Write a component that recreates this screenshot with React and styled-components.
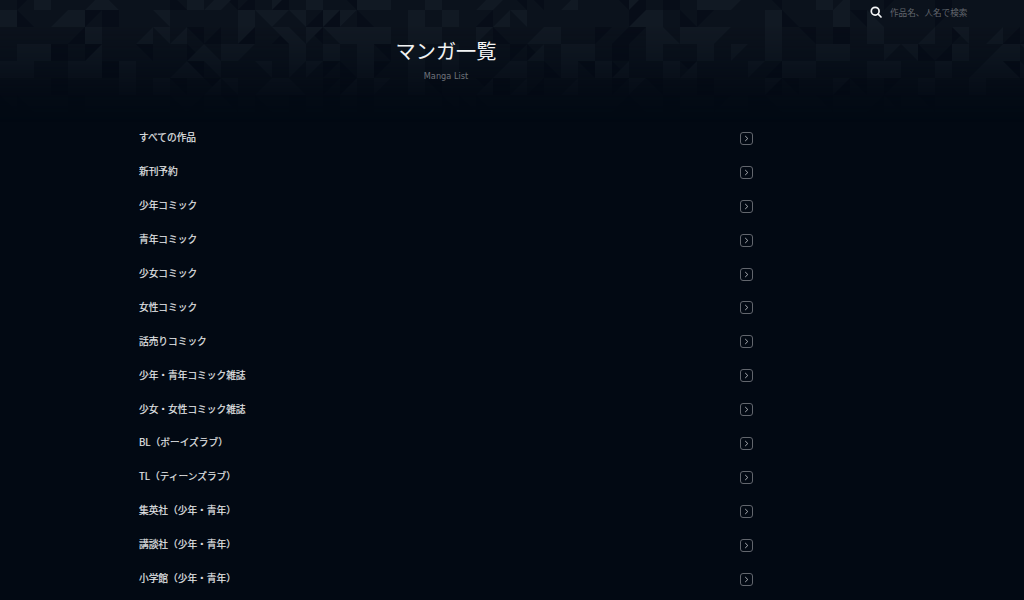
import React from "react";
import styled, { createGlobalStyle } from "styled-components";

const Global = createGlobalStyle`
  html, body { margin: 0; padding: 0; background: #020913; overflow: hidden; }
  #root { height: 600px; }
`;

const CJK = `"Noto Sans CJK JP", "Noto Sans", sans-serif`;

const Page = styled.div`
  position: relative;
  width: 1024px;
  height: 600px;
  overflow: hidden;
  background: #020913;
  font-family: ${CJK};
`;

const Backdrop = styled.svg`
  position: absolute;
  left: 0;
  top: 0;
  width: 1024px;
  height: 125px;
  -webkit-mask-image: linear-gradient(to bottom, #000 0, #000 25px, rgba(0,0,0,.65) 62px, rgba(0,0,0,.28) 90px, transparent 122px);
  mask-image: linear-gradient(to bottom, #000 0, #000 25px, rgba(0,0,0,.65) 62px, rgba(0,0,0,.28) 90px, transparent 122px);
`;

const Content = styled.div`
  position: relative;
  display: flex;
  flex-direction: column;
`;

const TopBar = styled.div`
  display: flex;
  justify-content: flex-end;
  align-items: center;
  height: 24px;
  padding-right: 57px;
  gap: 8px;
`;

const SearchHint = styled.span`
  font-size: 8.6px;
  color: #62666d;
  width: 77px;
  white-space: nowrap;
`;

const Column = styled.main`
  width: 614px;
  margin-left: 139px;
  display: flex;
  flex-direction: column;
`;

const Heading = styled.header`
  display: flex;
  flex-direction: column;
  align-items: center;
  height: 97.5px;
  padding-top: 12px;
  box-sizing: border-box;
`;

const Title = styled.h1`
  margin: 0;
  font-size: 20.2px;
  line-height: 30px;
  font-weight: 400;
  color: #f2f3f4;
`;

const Subtitle = styled.div`
  margin-top: 4px;
  font-family: "DejaVu Sans", sans-serif;
  font-size: 8.2px;
  line-height: 12px;
  color: #70747b;
`;

const List = styled.ul`
  list-style: none;
  margin: 0;
  padding: 0;
`;

const Row = styled.li`
  height: 33.9px;
  display: flex;
  align-items: center;
  justify-content: space-between;
`;

const Label = styled.span`
  font-size: 9.7px;
  line-height: 14px;
  font-weight: 400;
  -webkit-text-stroke: 0.2px #d8dadd;
  color: #e8e9eb;
  white-space: nowrap;
  position: relative;
  top: -1px;
`;

const Arrow = styled.span`
  width: 13px;
  height: 13px;
  box-sizing: border-box;
  border: 1px solid #62666d;
  border-radius: 3px;
  display: flex;
  align-items: center;
  justify-content: center;
`;

const ROWS = [
  "  #  cd    #ca  a #",
  "#  c#    b    #bab a",
  "     #  cbc   a bdab#",
  " ##  c     cd#a  # #",
  "##  ## #  cdb  b aa",
  "       # #  cb c#d",
];
const ROWS2 = [
  " ##  #  ca   c   a   #",
  "a   # #  cb      c#",
  " ## ##  a  c#     #d##",
  " #  # #    c ##   #  #",
  " #  # #  c#  # #c  #c",
  "c a #   c c  c   a",
];
const ROWS3 = [
  " #a    #c",
  "    #   # d",
  " a  #     #  c b c  a",
  "  a #  ##  ab  # c#baa",
  "   a ##   ##  # c#ddd",
  "    a   a    #  #   b",
];

const TILE = 17;
const OFFSET = -7;

function tilePath(kind, x, y) {
  const s = TILE;
  const a = [x, y], b = [x + s, y], c = [x + s, y + s], d = [x, y + s];
  const poly = {
    "#": [a, b, c, d],
    a: [a, b, d],
    b: [a, b, c],
    c: [b, c, d],
    d: [a, c, d],
  }[kind];
  return poly ? `M${poly.map((p) => p.join(" ")).join("L")}Z` : "";
}

function seeded(i, j) {
  const v = Math.sin(i * 12.9898 + j * 78.233) * 43758.5453;
  return v - Math.floor(v);
}

function Tiles() {
  const light = [];
  const dark = [];
  for (let r = 0; r < 7; r++) {
    const y = OFFSET + r * TILE;
    const put = (str, start) => {
      [...(str || "")].forEach((k, i) => {
        if (k !== " ") light.push(tilePath(k, start + i * TILE, y));
      });
    };
    put(ROWS[r], 0);
    put(ROWS2[r], 20 * TILE);
    put(ROWS3[r], 41 * TILE);
    for (let c = 0; c < 61; c++) {
      if (seeded(c, r) > 0.7) dark.push(tilePath("abcd#"[Math.floor(seeded(r, c) * 5)], c * TILE, y));
    }
  }
  return (
    <Backdrop viewBox="0 0 1024 125" aria-hidden="true">
      <rect width="1024" height="125" fill="#0b121c" />
      <path d={dark.join("")} fill="#070d18" />
      <path d={light.join("")} fill="#111923" />
    </Backdrop>
  );
}

const ITEMS = [
  "すべての作品",
  "新刊予約",
  "少年コミック",
  "青年コミック",
  "少女コミック",
  "女性コミック",
  "話売りコミック",
  "少年・青年コミック雑誌",
  "少女・女性コミック雑誌",
  "BL（ボーイズラブ）",
  "TL（ティーンズラブ）",
  "集英社（少年・青年）",
  "講談社（少年・青年）",
  "小学館（少年・青年）",
];

export default function App() {
  return (
    <Page>
      <Global />
      <Tiles />
      <Content>
        <TopBar>
          <svg width="12" height="12" viewBox="0 0 12 12" fill="none" stroke="#f4f5f6" strokeWidth="1.7" strokeLinecap="round">
            <circle cx="5.2" cy="5.2" r="3.9" />
            <path d="M8.2 8.2 11 11" />
          </svg>
          <SearchHint>作品名、人名で検索</SearchHint>
        </TopBar>
        <Column>
          <Heading>
            <Title>マンガ一覧</Title>
            <Subtitle>Manga List</Subtitle>
          </Heading>
          <List>
            {ITEMS.map((t) => (
              <Row key={t}>
                <Label>{t}</Label>
                <Arrow>
                  <svg width="5" height="7" viewBox="0 0 5 7" fill="none" stroke="#a9acb1" strokeWidth="1">
                    <path d="M1.2 1 3.8 3.5 1.2 6" />
                  </svg>
                </Arrow>
              </Row>
            ))}
          </List>
        </Column>
      </Content>
    </Page>
  );
}
